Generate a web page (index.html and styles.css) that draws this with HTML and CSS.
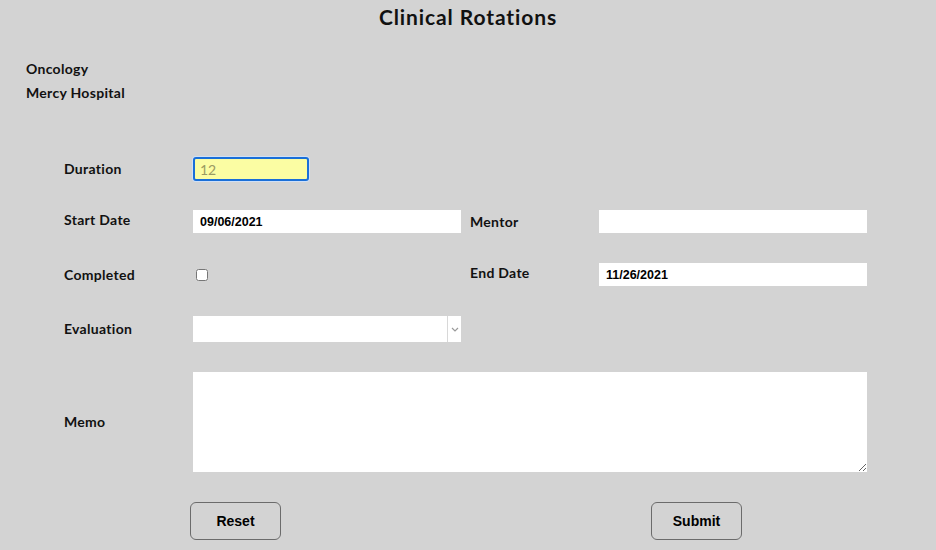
FILE: index.html
```html
<!DOCTYPE html>
<html>
<head>
<meta charset="utf-8">
<link rel="stylesheet" href="styles.css">
</head>
<body>
<h1 class="title">Clinical Rotations</h1>
<div class="info">
  <div class="info-line">Oncology</div>
  <div class="info-line">Mercy Hospital</div>
</div>
<form class="form">
  <label class="label">Duration</label>
  <div class="field"><input class="input duration" type="text" value="12"></div>
  <div class="empty"></div>
  <div class="empty"></div>

  <label class="label label-start">Start Date</label>
  <div class="field"><input class="input" type="text" value="09/06/2021"></div>
  <label class="label">Mentor</label>
  <div class="field"><input class="input" type="text" value=""></div>

  <label class="label">Completed</label>
  <div class="field"><input class="check" type="checkbox"></div>
  <label class="label label-end">End Date</label>
  <div class="field"><input class="input" type="text" value="11/26/2021"></div>

  <label class="label">Evaluation</label>
  <div class="field">
    <div class="select-wrap">
      <select class="select"><option></option></select>
      <span class="arrow"><svg width="8" height="5" viewBox="0 0 8 5"><path d="M1 1 L4 4 L7 1" fill="none" stroke="#9a9a9a" stroke-width="1.2"/></svg></span>
    </div>
  </div>
  <div class="empty"></div>
  <div class="empty"></div>

  <label class="label">Memo</label>
  <div class="field span3"><textarea class="memo"></textarea></div>
</form>
<div class="buttons">
  <button class="btn" type="button">Reset</button>
  <button class="btn" type="button">Submit</button>
</div>
</body>
</html>
```
FILE: styles.css
```css
html, body {
  margin: 0;
  padding: 0;
  background: #d3d3d3;
  font-family: "Lato", "Noto Sans", sans-serif;
  color: #111;
}
.title {
  margin: 0;
  text-align: center;
  font-size: 21px;
  letter-spacing: 0.9px;
  line-height: 34px;
  font-weight: 700;
}
.info {
  margin-top: 23px;
  padding-left: 26px;
}
.info-line {
  font-size: 14px;
  font-weight: 700;
  letter-spacing: 0.3px;
  line-height: 24px;
}
.form {
  margin-top: 52px;
  margin-left: 64px;
  display: grid;
  grid-template-columns: 129px 277px 129px 268px;
  row-gap: 30px;
  align-items: center;
}
.label {
  font-size: 14px;
  font-weight: 700;
  letter-spacing: 0.3px;
  line-height: 18px;
}
.label-start { position: relative; top: -2px; }
.label-end { position: relative; top: -2px; }
.field {
  display: flex;
  align-items: center;
}
.span3 { grid-column: 2 / 5; }
.input {
  box-sizing: border-box;
  width: 268px;
  height: 23px;
  border: none;
  outline: none;
  padding: 0 7px;
  background: #fff;
  font-family: "Liberation Sans", Arial, sans-serif;
  font-weight: 700;
  font-size: 12.5px;
  color: #000;
}
.input.duration {
  width: 116px;
  height: 24px;
  margin-bottom: -1px;
  background: #fbfda3;
  border: 2px solid #1a6fd8;
  border-radius: 3px;
  padding: 0 5px;
  font-family: "Lato", sans-serif;
  font-weight: 400;
  font-size: 14px;
  color: #9a9a62;
  box-shadow: 0 0 0 1px #cfe0f7;
}
.check {
  margin: 0 0 0 3px;
  width: 12px;
  height: 12px;
}
.select-wrap {
  display: flex;
  width: 268px;
  height: 26px;
  background: #fff;
}
.select {
  flex: 1;
  -webkit-appearance: none;
  appearance: none;
  border: none;
  outline: none;
  background: #fff;
  height: 26px;
}
.arrow {
  width: 13px;
  border-left: 1px solid #d8d8d8;
  display: flex;
  align-items: center;
  justify-content: center;
}
.memo {
  box-sizing: border-box;
  width: 674px;
  height: 100px;
  border: none;
  outline: none;
  background: #fff;
  resize: both;
  display: block;
}
.buttons {
  margin-top: 30px;
  padding-left: 190px;
  display: flex;
  gap: 370px;
}
.btn {
  width: 91px;
  height: 38px;
  background: #d3d3d3;
  border: 1px solid #6b6b6b;
  border-radius: 6px;
  font-family: "Liberation Sans", Arial, sans-serif;
  font-weight: 700;
  font-size: 14px;
  color: #000;
  padding: 0;
}
```
